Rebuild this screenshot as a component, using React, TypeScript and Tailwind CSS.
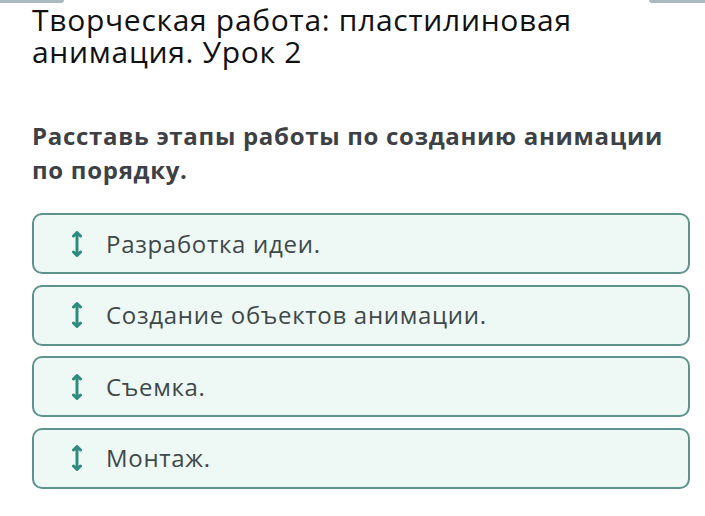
import React from "react";

const STEPS = [
  "Разработка идеи.",
  "Создание объектов анимации.",
  "Съемка.",
  "Монтаж.",
];

function UpDownIcon() {
  return (
    <svg width="10" height="26" viewBox="0 0 10 26" className="shrink-0">
      <path
        d="M1.5 5 L5 1.5 L8.5 5 M5 2 V24 M1.5 21 L5 24.5 L8.5 21"
        fill="none"
        stroke="#2e8b7e"
        strokeWidth="3"
        strokeLinecap="round"
        strokeLinejoin="round"
      />
    </svg>
  );
}

export default function App() {
  return (
    <div
      className="relative w-[705px] h-[516px] overflow-hidden bg-white"
      style={{ fontFamily: '"Open Sans", "Noto Sans", sans-serif' }}
    >
      <div className="absolute left-0 top-0 h-[3px] w-[64px] rounded-br-md bg-[#aab8c2]" />
      <div className="absolute right-0 top-0 h-[3px] w-[56px] rounded-bl-md bg-[#aab8c2]" />

      <div className="flex flex-col pl-[32px] pr-[8px] pt-[4px]">
        <h1 className="text-[30px] leading-[32px] text-[#111] font-normal tracking-[0.7px] whitespace-nowrap">
          Творческая работа: пластилиновая
          <br />
          анимация. Урок 2
        </h1>

        <p className="mt-[51px] text-[24px] leading-[34px] font-bold text-[#3d4145] tracking-[0.7px] whitespace-nowrap">
          Расставь этапы работы по созданию анимации
          <br />
          по порядку.
        </p>

        <div className="mt-[26px] flex w-[658px] flex-col gap-[10.5px]">
          {STEPS.map((step) => (
            <div
              key={step}
              className="flex h-[61px] items-center gap-[24px] rounded-[10px] border-2 border-[#5f938d] bg-[#eef9f6] pl-[38px]"
            >
              <UpDownIcon />
              <span className="text-[24px] tracking-[0.7px] text-[#3f4848]">{step}</span>
            </div>
          ))}
        </div>
      </div>
    </div>
  );
}
